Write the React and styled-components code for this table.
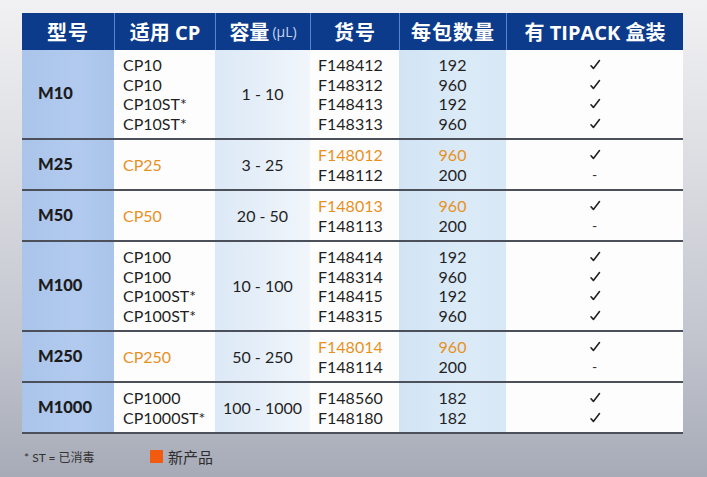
import styled, { createGlobalStyle } from "styled-components";

const Global = createGlobalStyle`
  html, body {
    margin: 0;
    padding: 0;
  }
  body {
    font-family: Lato, "Noto Sans CJK SC", sans-serif;
    color: #222;
  }
`;

const COLS = "92px 101px 95px 89px 107px 177px";
const ORANGE = "#e8911f";

const Page = styled.div`
  width: 707px;
  height: 477px;
  box-sizing: border-box;
  padding: 13px 0 0 22px;
  background: linear-gradient(180deg, #f1f1f3 0%, #dcdde2 35%, #c3c6cf 70%, #a7abb7 100%);
  overflow: hidden;
`;

const Table = styled.div`
  width: 661px;
`;

const Header = styled.div`
  display: grid;
  grid-template-columns: ${COLS};
  height: 37px;
  background: #0d3b8c;
`;

const HeadCell = styled.div`
  display: flex;
  align-items: center;
  justify-content: center;
  color: #fff;
  font-size: 20px;
  font-weight: 700;
  font-family: "Open Sans", "Noto Sans CJK SC", sans-serif;
  border-left: ${(p) => (p.$first ? "none" : "1.5px solid #5a84d0")};
  white-space: nowrap;
  letter-spacing: ${(p) => (p.$tight ? "0" : "1px")};
`;

const Unit = styled.span`
  font-size: 14px;
  font-weight: 400;
  margin-left: 3px;
  letter-spacing: 0;
  color: #c9d6f0;
`;

const Group = styled.div`
  display: grid;
  grid-template-columns: ${COLS};
  border-bottom: 2px solid #4b505b;
`;

const Cell = styled.div`
  display: flex;
  flex-direction: column;
  justify-content: center;
  align-items: ${(p) => (p.$left ? "flex-start" : "center")};
  padding: 5px 0 5px ${(p) => p.$pad || 0}px;
  background: ${(p) => p.$bg || "#fdfdfd"};
  font-size: 16px;
  line-height: 19.5px;
`;

const Model = styled.span`
  font-weight: 900;
  font-size: 16.5px;
  color: #1c1c1c;
`;

const Line = styled.span`
  color: ${(p) => (p.$new ? ORANGE : "#1f1f1f")};
  white-space: nowrap;
`;

const Tick = styled.svg`
  width: 12px;
  height: 19.5px;
  display: block;
`;

const Dash = styled.span`
  display: block;
  line-height: 19.5px;
  font-size: 14px;
  color: #333;
`;

const Footer = styled.div`
  display: flex;
  align-items: center;
  margin-top: 12px;
  padding-left: 2px;
`;

const Note = styled.span`
  font-size: 12px;
  color: #333;
  width: 126px;
`;

const NewMark = styled.span`
  display: inline-block;
  width: 13px;
  height: 13px;
  background: #f15a0f;
  margin-right: 5px;
`;

const NewLabel = styled.span`
  font-size: 15px;
  color: #2d2d2d;
  font-family: "Noto Sans CJK SC", sans-serif;
`;

const BLUE = "linear-gradient(90deg, #aac4ea 0%, #b2caee 60%, #a9c3ea 100%)";
const LIGHT = "linear-gradient(90deg, #dce9f6 0%, #e8f0f9 60%, #f1f6fb 100%)";
const QTY = "linear-gradient(90deg, #d1e4f5 0%, #dbeaf7 60%, #d7e8f6 100%)";

const groups = [
  {
    model: "M10",
    cp: [["CP10"], ["CP10"], ["CP10ST*"], ["CP10ST*"]],
    range: "1 - 10",
    codes: [["F148412"], ["F148312"], ["F148413"], ["F148313"]],
    qty: [["192"], ["960"], ["192"], ["960"]],
    tip: [1, 1, 1, 1],
  },
  {
    model: "M25",
    cp: [["CP25", true]],
    range: "3 - 25",
    codes: [["F148012", true], ["F148112"]],
    qty: [["960", true], ["200"]],
    tip: [1, 0],
  },
  {
    model: "M50",
    cp: [["CP50", true]],
    range: "20 - 50",
    codes: [["F148013", true], ["F148113"]],
    qty: [["960", true], ["200"]],
    tip: [1, 0],
  },
  {
    model: "M100",
    cp: [["CP100"], ["CP100"], ["CP100ST*"], ["CP100ST*"]],
    range: "10 - 100",
    codes: [["F148414"], ["F148314"], ["F148415"], ["F148315"]],
    qty: [["192"], ["960"], ["192"], ["960"]],
    tip: [1, 1, 1, 1],
  },
  {
    model: "M250",
    cp: [["CP250", true]],
    range: "50 - 250",
    codes: [["F148014", true], ["F148114"]],
    qty: [["960", true], ["200"]],
    tip: [1, 0],
  },
  {
    model: "M1000",
    cp: [["CP1000"], ["CP1000ST*"]],
    range: "100 - 1000",
    codes: [["F148560"], ["F148180"]],
    qty: [["182"], ["182"]],
    tip: [1, 1],
  },
];

function Check() {
  return (
    <Tick viewBox="0 0 12 19.5">
      <path
        d="M2 10.8 L4.4 13.4 L10.5 5.6"
        fill="none"
        stroke="#222"
        strokeWidth="1.6"
        strokeLinecap="round"
        strokeLinejoin="round"
      />
    </Tick>
  );
}

function Lines({ items }) {
  return items.map(([text, isNew], i) => (
    <Line key={i} $new={isNew}>
      {text}
    </Line>
  ));
}

function Row({ g }) {
  return (
    <Group>
      <Cell $bg={BLUE} $left $pad={16}>
        <Model>{g.model}</Model>
      </Cell>
      <Cell $left $pad={9}>
        <Lines items={g.cp} />
      </Cell>
      <Cell $bg={LIGHT}>
        <Line>{g.range}</Line>
      </Cell>
      <Cell $left $pad={8}>
        <Lines items={g.codes} />
      </Cell>
      <Cell $bg={QTY}>
        <Lines items={g.qty} />
      </Cell>
      <Cell>
        {g.tip.map((t, i) => (t ? <Check key={i} /> : <Dash key={i}>-</Dash>))}
      </Cell>
    </Group>
  );
}

export default function App() {
  return (
    <Page>
      <Global />
      <Table>
        <Header>
          <HeadCell $first>型号</HeadCell>
          <HeadCell $tight>适用 CP</HeadCell>
          <HeadCell $tight>
            容量<Unit>(μL)</Unit>
          </HeadCell>
          <HeadCell>货号</HeadCell>
          <HeadCell>每包数量</HeadCell>
          <HeadCell $tight>有 TIPACK 盒装</HeadCell>
        </Header>
        {groups.map((g) => (
          <Row key={g.model} g={g} />
        ))}
      </Table>
      <Footer>
        <Note>* ST = 已消毒</Note>
        <NewMark />
        <NewLabel>新产品</NewLabel>
      </Footer>
    </Page>
  );
}
